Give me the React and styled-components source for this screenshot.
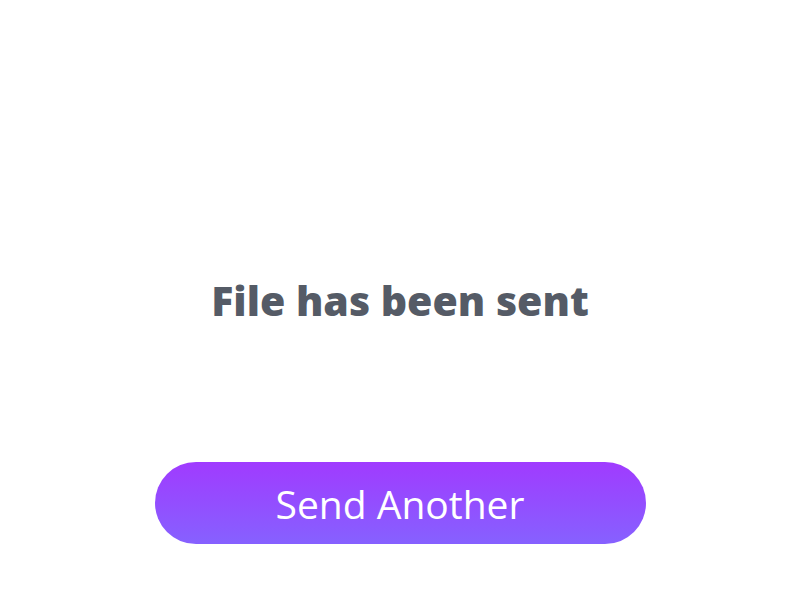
import React from 'react';
import styled, { createGlobalStyle } from 'styled-components';

const GlobalStyle = createGlobalStyle`
  html, body {
    margin: 0;
    padding: 0;
    background: #fff;
    font-family: 'Open Sans', 'Liberation Sans', sans-serif;
  }
`;

const Page = styled.div`
  height: 600px;
  display: flex;
  flex-direction: column;
  align-items: center;
  padding-top: 271px;
  box-sizing: border-box;
`;

const Title = styled.h1`
  margin: 0;
  font-size: 41px;
  line-height: 58px;
  font-weight: 800;
  color: #555b66;
  text-align: center;
`;

const Button = styled.button`
  margin-top: 133px;
  width: 491px;
  height: 82px;
  border: none;
  border-radius: 41px;
  background: linear-gradient(180deg, #a03bff 0%, #8661ff 100%);
  color: #fff;
  font-family: 'Open Sans', 'Liberation Sans', sans-serif;
  font-size: 39px;
  font-weight: 400;
  cursor: pointer;
`;

export default function App() {
  return (
    <Page>
      <GlobalStyle />
      <Title>File has been sent</Title>
      <Button>Send Another</Button>
    </Page>
  );
}
